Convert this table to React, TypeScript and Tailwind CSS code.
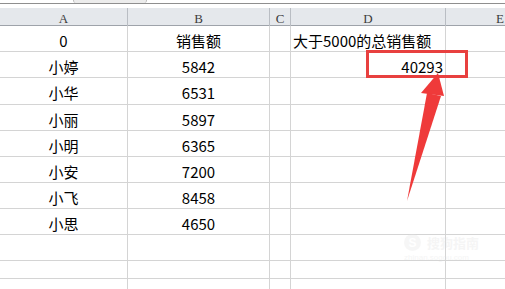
type Row = {
  name: string;
  sales: string;
  note?: string;
  total?: string;
  h: string;
};

// heights include the 1px bottom grid line
const ROWS: Row[] = [
  { name: "0", sales: "销售额", note: "大于5000的总销售额", h: "h-[26px]" },
  { name: "小婷", sales: "5842", total: "40293", h: "h-[26px]" },
  { name: "小华", sales: "6531", h: "h-[27px]" },
  { name: "小丽", sales: "5897", h: "h-[26px]" },
  { name: "小明", sales: "6365", h: "h-[26px]" },
  { name: "小安", sales: "7200", h: "h-[26px]" },
  { name: "小飞", sales: "8458", h: "h-[26px]" },
  { name: "小思", sales: "4650", h: "h-[26px]" },
  { name: "", sales: "", h: "h-[26px]" },
  { name: "", sales: "", h: "h-[18px]" },
  { name: "", sales: "", h: "h-[26px]" },
];

const COLS = "grid grid-cols-[128px_142px_21px_155px_1fr]";
const CELL_FONT = "font-['Noto_Sans_CJK_SC',sans-serif] text-[15px] leading-none text-black";

function HeaderRow() {
  const cell = "flex items-center justify-center border-r border-[#b9bdc3] pt-px";
  return (
    <div className={`${COLS} h-[18px] border-b border-[#9ea3aa] bg-[#e5e8ec] font-['Liberation_Serif',serif] text-[13px] text-[#3c3c3c]`}>
      <div className={cell}>A</div>
      <div className={cell}>B</div>
      <div className={cell}>C</div>
      <div className={cell}>D</div>
      <div className="flex items-center pl-[50px]">E</div>
    </div>
  );
}

function SheetRow({ row }: { row: Row }) {
  const cell = "flex items-center border-r border-[#d4d4d4] pt-[3px]";
  return (
    <div className={`${COLS} ${row.h} border-b border-[#d4d4d4] ${CELL_FONT}`}>
      <div className={`${cell} justify-center`}>{row.name}</div>
      <div className={`${cell} justify-center`}>{row.sales}</div>
      <div className={cell} />
      <div className={`${cell} ${row.total ? "justify-end pr-[2px]" : "justify-start pl-[2px]"} whitespace-nowrap`}>
        {row.note ?? row.total}
      </div>
      <div />
    </div>
  );
}

export default function App() {
  return (
    <div className="relative h-[289px] w-[505px] overflow-hidden bg-white">
      {/* strip above the column headers */}
      <div className="flex h-[8px] flex-col">
        <div className="h-[3px]">
          <div className="ml-[73px] h-[3px] w-[74px] rounded-b-[3px] border-x border-[#bcbcbc] bg-[#ececec]" />
        </div>
        <div className="h-px bg-[#8f8f8f]" />
      </div>

      <HeaderRow />
      {ROWS.map((row, i) => (
        <SheetRow key={i} row={row} />
      ))}

      {/* highlight around the result cell */}
      <div className="absolute left-[366px] top-[50px] h-[28px] w-[102px] border-[3px] border-[#e8403f]" />

      {/* pointer arrow */}
      <svg className="absolute left-0 top-0" width="505" height="289" viewBox="0 0 505 289">
        <polygon points="438,73 444,96 421,93" fill="#ef3a3a" />
        <polygon points="427,93 441,96 407,201" fill="#ef3a3a" />
      </svg>

      {/* faint site watermark */}
      <div className="absolute left-[404px] top-[234px] flex flex-col items-start gap-[3px] opacity-30">
        <div className="flex items-center gap-[6px]">
          <div className="flex h-[17px] w-[17px] items-center justify-center rounded-full bg-[#e4e4e4] font-['Liberation_Sans',sans-serif] text-[12px] font-bold text-white">
            S
          </div>
          <span className="font-['Noto_Sans_CJK_SC',sans-serif] text-[13px] font-bold leading-none text-[#e0e0e0]">搜狗指南</span>
        </div>
        <span className="font-['Liberation_Sans',sans-serif] text-[8px] leading-none text-[#e0e0e0]">zhinan.sogou.com</span>
      </div>
    </div>
  );
}
